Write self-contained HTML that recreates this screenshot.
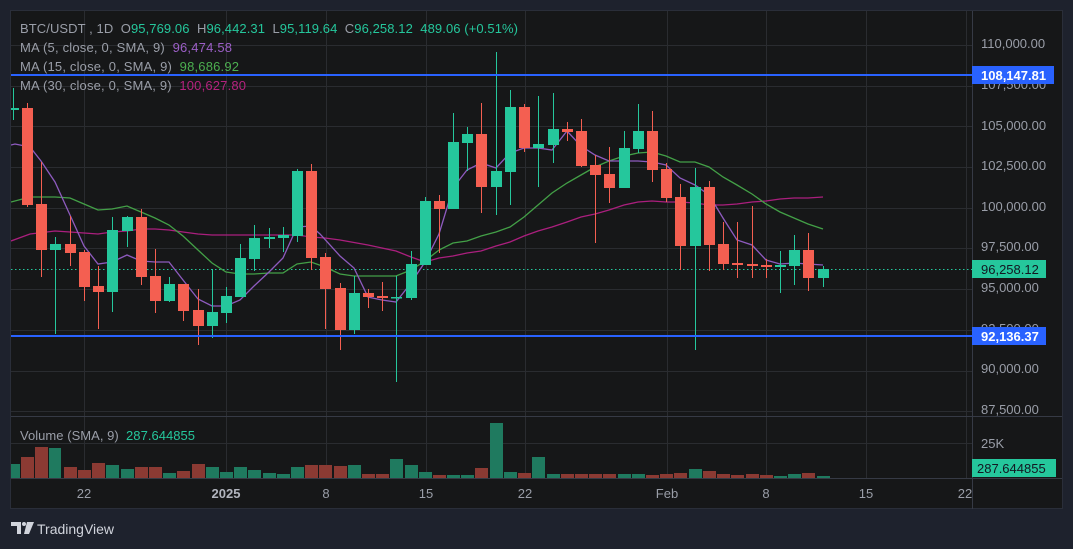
<!DOCTYPE html>
<html><head><meta charset="utf-8"><style>
html,body{margin:0;padding:0;background:#1e222d;width:1073px;height:549px;overflow:hidden}
svg{display:block}
text{font-family:"Liberation Sans",sans-serif;white-space:pre}
</style></head><body>
<svg width="1073" height="549" viewBox="0 0 1073 549" xmlns="http://www.w3.org/2000/svg">
<defs><clipPath id="pc"><rect x="11" y="11" width="961" height="405"/></clipPath>
<clipPath id="vc"><rect x="11" y="416" width="961" height="62"/></clipPath></defs>
<rect x="0" y="0" width="1073" height="549" fill="#1e222d"/>
<rect x="10.5" y="10.5" width="1052" height="498" fill="#161718" stroke="#2a2e39"/>
<g stroke="#2a2c30" stroke-width="1">
<line x1="11" x2="972" y1="45.5" y2="45.5"/><line x1="11" x2="972" y1="86.5" y2="86.5"/>
<line x1="11" x2="972" y1="126.5" y2="126.5"/><line x1="11" x2="972" y1="167.5" y2="167.5"/>
<line x1="11" x2="972" y1="208.5" y2="208.5"/><line x1="11" x2="972" y1="248.5" y2="248.5"/>
<line x1="11" x2="972" y1="289.5" y2="289.5"/><line x1="11" x2="972" y1="330.5" y2="330.5"/>
<line x1="11" x2="972" y1="371.5" y2="371.5"/><line x1="11" x2="972" y1="411.5" y2="411.5"/>
<line x1="11" x2="972" y1="443.5" y2="443.5"/>
<line x1="84.5" x2="84.5" y1="11" y2="478"/><line x1="226.5" x2="226.5" y1="11" y2="478"/>
<line x1="326.5" x2="326.5" y1="11" y2="478"/><line x1="426.5" x2="426.5" y1="11" y2="478"/>
<line x1="525.5" x2="525.5" y1="11" y2="478"/><line x1="667.5" x2="667.5" y1="11" y2="478"/>
<line x1="766.5" x2="766.5" y1="11" y2="478"/><line x1="866.5" x2="866.5" y1="11" y2="478"/>
<line x1="966.5" x2="966.5" y1="11" y2="478"/>
</g>
<g stroke="#363a45"><line x1="11" x2="1062" y1="416.5" y2="416.5"/><line x1="11" x2="1062" y1="478.5" y2="478.5"/><line x1="972.5" x2="972.5" y1="11" y2="509"/></g>

<g clip-path="url(#pc)">
<line x1="11" x2="972" y1="269.5" y2="269.5" stroke="#25c79c" stroke-width="1" stroke-dasharray="1.5 2.5"/>
<polyline fill="none" stroke="#ab1f7e" stroke-width="1.3" points="11,241 30,234 55,231 70,232 84,233 98,234 112,232 127,231 141,229 155,229 169,230 183,232 198,234 212,235 226,235 240,235 254,235 269,235 283,235 297,235 311,237 325,238 340,240 368,245 396,251 411,257 425,262 439,258 453,256 467,253 481,251 496,246 510,242 524,236 538,231 552,227 567,222 581,217 595,214 609,210 624,205 638,202 652,201 666,202 680,202 695,203 709,205 723,205 737,204 752,202 766,201 780,199 794,198 808,198 823,197"/>
<polyline fill="none" stroke="#43a047" stroke-width="1.3" points="11,202 30,197 55,197 70,198 84,204 98,210 112,209 127,206 141,212 155,218 169,225 183,236 198,250 212,263 226,272 240,274 254,274 269,273 283,273 297,264 311,262 325,267 340,274 354,276 368,276 382,276 396,276 411,270 425,261 439,250 453,243 467,241 481,236 496,232 510,227 524,217 538,205 552,193 567,183 581,175 595,167 609,161 624,156 638,153 652,152 666,156 680,162 695,162 709,167 723,177 737,185 752,194 766,204 780,212 794,218 808,224 823,229"/>
<polyline fill="none" stroke="#8e5bbf" stroke-width="1.3" points="11,145 15,144 30,147 41,161 55,182 70,215 84,246 98,264 112,262 127,255 141,261 155,262 169,262 183,280 198,299 212,306 226,306 240,300 254,286 269,272 283,258 297,227 311,226 320,234 340,256 354,268 368,297 382,300 396,302 411,283 425,262 439,234 453,188 467,170 481,163 496,168 510,153 524,148 538,148 552,150 567,131 581,146 595,155 609,161 624,161 638,161 652,162 666,165 680,178 695,185 709,195 723,218 737,240 752,245 766,260 780,264 794,263 808,264 823,265"/>
<g fill="#25c79c" stroke="#25c79c" stroke-width="1">
<line x1="13.5" x2="13.5" y1="88" y2="120"/><rect x="8" y="108" width="11" height="2" stroke="none"/>
<line x1="55.5" x2="55.5" y1="237" y2="334"/><rect x="50" y="244" width="11" height="6" stroke="none"/>
<line x1="112.5" x2="112.5" y1="217" y2="312"/><rect x="107" y="230" width="11" height="62" stroke="none"/>
<line x1="127.5" x2="127.5" y1="216" y2="247"/><rect x="122" y="217" width="11" height="14" stroke="none"/>
<line x1="169.5" x2="169.5" y1="277" y2="302"/><rect x="164" y="284" width="11" height="17" stroke="none"/>
<line x1="212.5" x2="212.5" y1="269" y2="338"/><rect x="207" y="312" width="11" height="14" stroke="none"/>
<line x1="226.5" x2="226.5" y1="287" y2="323"/><rect x="221" y="296" width="11" height="17" stroke="none"/>
<line x1="240.5" x2="240.5" y1="244" y2="297"/><rect x="235" y="258" width="11" height="39" stroke="none"/>
<line x1="254.5" x2="254.5" y1="225" y2="271"/><rect x="249" y="238" width="11" height="21" stroke="none"/>
<line x1="269.5" x2="269.5" y1="228" y2="248"/><rect x="264" y="237" width="11" height="2" stroke="none"/>
<line x1="283.5" x2="283.5" y1="227" y2="252"/><rect x="278" y="235" width="11" height="3" stroke="none"/>
<line x1="297.5" x2="297.5" y1="169" y2="242"/><rect x="292" y="171" width="11" height="65" stroke="none"/>
<line x1="354.5" x2="354.5" y1="276" y2="334"/><rect x="349" y="293" width="11" height="37" stroke="none"/>
<line x1="396.5" x2="396.5" y1="276" y2="382"/><rect x="391" y="297" width="11" height="1.5" stroke="none"/>
<line x1="411.5" x2="411.5" y1="251" y2="300"/><rect x="406" y="264" width="11" height="34" stroke="none"/>
<line x1="425.5" x2="425.5" y1="197" y2="265"/><rect x="420" y="201" width="11" height="64" stroke="none"/>
<line x1="453.5" x2="453.5" y1="113" y2="209"/><rect x="448" y="142" width="11" height="67" stroke="none"/>
<line x1="467.5" x2="467.5" y1="127" y2="171"/><rect x="462" y="134" width="11" height="9" stroke="none"/>
<line x1="496.5" x2="496.5" y1="52" y2="215"/><rect x="491" y="171" width="11" height="16" stroke="none"/>
<line x1="510.5" x2="510.5" y1="90" y2="205"/><rect x="505" y="107" width="11" height="65" stroke="none"/>
<line x1="538.5" x2="538.5" y1="96" y2="187"/><rect x="533" y="144" width="11" height="4" stroke="none"/>
<line x1="553.5" x2="553.5" y1="93" y2="163"/><rect x="548" y="129" width="11" height="16" stroke="none"/>
<line x1="624.5" x2="624.5" y1="131" y2="188"/><rect x="619" y="148" width="11" height="40" stroke="none"/>
<line x1="638.5" x2="638.5" y1="104" y2="153"/><rect x="633" y="131" width="11" height="18" stroke="none"/>
<line x1="695.5" x2="695.5" y1="168" y2="350"/><rect x="690" y="187" width="11" height="59" stroke="none"/>
<line x1="780.5" x2="780.5" y1="251" y2="293"/><rect x="775" y="265" width="11" height="2" stroke="none"/>
<line x1="794.5" x2="794.5" y1="235" y2="285"/><rect x="789" y="250" width="11" height="16" stroke="none"/>
<line x1="823.5" x2="823.5" y1="266" y2="287"/><rect x="818" y="269" width="11" height="9" stroke="none"/>
</g>
<g fill="#f45f51" stroke="#f45f51" stroke-width="1">
<line x1="27.5" x2="27.5" y1="103" y2="207"/><rect x="22" y="108" width="11" height="97" stroke="none"/>
<line x1="41.5" x2="41.5" y1="162" y2="277"/><rect x="36" y="204" width="11" height="46" stroke="none"/>
<line x1="70.5" x2="70.5" y1="216" y2="266"/><rect x="65" y="244" width="11" height="9" stroke="none"/>
<line x1="84.5" x2="84.5" y1="250" y2="301"/><rect x="79" y="252" width="11" height="35" stroke="none"/>
<line x1="98.5" x2="98.5" y1="266" y2="329"/><rect x="93" y="286" width="11" height="6" stroke="none"/>
<line x1="141.5" x2="141.5" y1="209" y2="285"/><rect x="136" y="217" width="11" height="60" stroke="none"/>
<line x1="155.5" x2="155.5" y1="249" y2="313"/><rect x="150" y="276" width="11" height="25" stroke="none"/>
<line x1="183.5" x2="183.5" y1="284" y2="321"/><rect x="178" y="284" width="11" height="27" stroke="none"/>
<line x1="198.5" x2="198.5" y1="289" y2="345"/><rect x="193" y="310" width="11" height="16" stroke="none"/>
<line x1="311.5" x2="311.5" y1="164" y2="270"/><rect x="306" y="171" width="11" height="87" stroke="none"/>
<line x1="325.5" x2="325.5" y1="253" y2="329"/><rect x="320" y="257" width="11" height="32" stroke="none"/>
<line x1="340.5" x2="340.5" y1="283" y2="350"/><rect x="335" y="288" width="11" height="42" stroke="none"/>
<line x1="368.5" x2="368.5" y1="289" y2="308"/><rect x="363" y="293" width="11" height="4" stroke="none"/>
<line x1="382.5" x2="382.5" y1="282" y2="311"/><rect x="377" y="296" width="11" height="2" stroke="none"/>
<line x1="439.5" x2="439.5" y1="195" y2="253"/><rect x="434" y="201" width="11" height="8" stroke="none"/>
<line x1="481.5" x2="481.5" y1="103" y2="213"/><rect x="476" y="134" width="11" height="53" stroke="none"/>
<line x1="524.5" x2="524.5" y1="104" y2="152"/><rect x="519" y="107" width="11" height="41" stroke="none"/>
<line x1="567.5" x2="567.5" y1="122" y2="141"/><rect x="562" y="129" width="11" height="3" stroke="none"/>
<line x1="581.5" x2="581.5" y1="119" y2="167"/><rect x="576" y="131" width="11" height="35" stroke="none"/>
<line x1="595.5" x2="595.5" y1="155" y2="243"/><rect x="590" y="165" width="11" height="10" stroke="none"/>
<line x1="609.5" x2="609.5" y1="147" y2="203"/><rect x="604" y="174" width="11" height="14" stroke="none"/>
<line x1="652.5" x2="652.5" y1="111" y2="182"/><rect x="647" y="131" width="11" height="39" stroke="none"/>
<line x1="666.5" x2="666.5" y1="163" y2="202"/><rect x="661" y="169" width="11" height="29" stroke="none"/>
<line x1="680.5" x2="680.5" y1="184" y2="270"/><rect x="675" y="197" width="11" height="49" stroke="none"/>
<line x1="709.5" x2="709.5" y1="181" y2="271"/><rect x="704" y="187" width="11" height="58" stroke="none"/>
<line x1="723.5" x2="723.5" y1="222" y2="270"/><rect x="718" y="244" width="11" height="20" stroke="none"/>
<line x1="737.5" x2="737.5" y1="222" y2="278"/><rect x="732" y="263" width="11" height="2" stroke="none"/>
<line x1="752.5" x2="752.5" y1="206" y2="278"/><rect x="747" y="264" width="11" height="2" stroke="none"/>
<line x1="766.5" x2="766.5" y1="259" y2="278"/><rect x="761" y="265" width="11" height="2" stroke="none"/>
<line x1="808.5" x2="808.5" y1="233" y2="291"/><rect x="803" y="250" width="11" height="28" stroke="none"/>
</g>
</g>
<line x1="11" x2="972" y1="75" y2="75" stroke="#2962ff" stroke-width="2"/>
<line x1="11" x2="972" y1="336" y2="336" stroke="#2962ff" stroke-width="2"/>

<g clip-path="url(#vc)">
<g fill="#1f7a5f">
<rect x="8" y="464" width="12" height="14"/><rect x="49" y="448" width="12" height="30"/>
<rect x="106" y="465" width="13" height="13"/><rect x="121" y="469" width="13" height="9"/>
<rect x="163" y="473" width="13" height="5"/><rect x="206" y="467" width="13" height="11"/>
<rect x="220" y="472" width="13" height="6"/><rect x="234" y="467" width="13" height="11"/>
<rect x="248" y="470" width="13" height="8"/><rect x="263" y="473" width="13" height="5"/>
<rect x="277" y="474" width="13" height="4"/><rect x="291" y="467" width="13" height="11"/>
<rect x="348" y="465" width="13" height="13"/><rect x="390" y="459" width="13" height="19"/>
<rect x="405" y="465" width="13" height="13"/><rect x="419" y="472" width="13" height="6"/>
<rect x="447" y="475" width="13" height="3"/><rect x="461" y="475" width="13" height="3"/>
<rect x="490" y="423" width="13" height="55"/><rect x="504" y="472" width="13" height="6"/>
<rect x="532" y="457" width="13" height="21"/><rect x="547" y="474" width="13" height="4"/>
<rect x="618" y="474" width="13" height="4"/><rect x="632" y="474" width="13" height="4"/>
<rect x="689" y="469" width="13" height="9"/><rect x="774" y="476" width="13" height="2"/>
<rect x="788" y="474" width="13" height="4"/><rect x="817" y="476" width="13" height="2"/>
</g>
<g fill="#8b3a33">
<rect x="21" y="457" width="13" height="21"/><rect x="35" y="447" width="13" height="31"/>
<rect x="64" y="467" width="13" height="11"/><rect x="78" y="470" width="13" height="8"/>
<rect x="92" y="463" width="13" height="15"/><rect x="135" y="467" width="13" height="11"/>
<rect x="149" y="467" width="13" height="11"/><rect x="177" y="471" width="13" height="7"/>
<rect x="192" y="464" width="13" height="14"/><rect x="305" y="465" width="13" height="13"/>
<rect x="319" y="465" width="13" height="13"/><rect x="334" y="466" width="13" height="12"/>
<rect x="362" y="474" width="13" height="4"/><rect x="376" y="474" width="13" height="4"/>
<rect x="433" y="475" width="13" height="3"/><rect x="475" y="468" width="13" height="10"/>
<rect x="518" y="473" width="13" height="5"/><rect x="561" y="474" width="13" height="4"/>
<rect x="575" y="474" width="13" height="4"/><rect x="589" y="474" width="13" height="4"/>
<rect x="603" y="474" width="13" height="4"/><rect x="646" y="475" width="13" height="3"/>
<rect x="660" y="474" width="13" height="4"/><rect x="674" y="473" width="13" height="5"/>
<rect x="703" y="471" width="13" height="7"/><rect x="717" y="474" width="13" height="4"/>
<rect x="731" y="475" width="13" height="3"/><rect x="746" y="474" width="13" height="4"/>
<rect x="760" y="475" width="13" height="3"/><rect x="802" y="473" width="13" height="5"/>
</g>
</g>

<g font-size="13" fill="#9a9ea8">
<text x="20" y="33" textLength="498" lengthAdjust="spacing">BTC/USDT , 1D  O<tspan fill="#25c79c">95,769.06</tspan>  H<tspan fill="#25c79c">96,442.31</tspan>  L<tspan fill="#25c79c">95,119.64</tspan>  C<tspan fill="#25c79c">96,258.12</tspan>  <tspan fill="#25c79c">489.06 (+0.51%)</tspan></text>
<text x="20" y="52" textLength="212" lengthAdjust="spacing">MA (5, close, 0, SMA, 9)  <tspan fill="#9c5fc7">96,474.58</tspan></text>
<text x="20" y="71" textLength="219" lengthAdjust="spacing">MA (15, close, 0, SMA, 9)  <tspan fill="#4caf50">98,686.92</tspan></text>
<text x="20" y="90" textLength="226" lengthAdjust="spacing">MA (30, close, 0, SMA, 9)  <tspan fill="#b5227e">100,627.80</tspan></text>
<text x="20" y="440" textLength="175" lengthAdjust="spacing">Volume (SMA, 9)  <tspan fill="#25c79c">287.644855</tspan></text>
</g>

<g font-size="13" fill="#9a9ea8">
<text x="981" y="48">110,000.00</text><text x="981" y="89">107,500.00</text>
<text x="981" y="130">105,000.00</text><text x="981" y="170">102,500.00</text>
<text x="981" y="211">100,000.00</text><text x="981" y="251">97,500.00</text>
<text x="981" y="292">95,000.00</text><text x="981" y="333">92,500.00</text>
<text x="981" y="373">90,000.00</text><text x="981" y="414">87,500.00</text>
<text x="981" y="448">25K</text>
</g>
<rect x="972" y="66" width="82" height="18" fill="#2962ff"/>
<text x="981" y="80" font-size="13" font-weight="bold" fill="#fff">108,147.81</text>
<rect x="972" y="327" width="74" height="18" fill="#2962ff"/>
<text x="981" y="341" font-size="13" font-weight="bold" fill="#fff">92,136.37</text>
<rect x="972" y="260" width="74" height="18" fill="#25c79c"/>
<text x="981" y="274" font-size="13" fill="#131722">96,258.12</text>
<rect x="972" y="459" width="84" height="18" fill="#25c79c"/>
<text x="977" y="473" font-size="13" fill="#131722">287.644855</text>

<g font-size="13" fill="#9a9ea8" text-anchor="middle">
<text x="84" y="498">22</text><text x="226" y="498" font-weight="bold" fill="#b2b5be">2025</text>
<text x="326" y="498">8</text><text x="426" y="498">15</text><text x="525" y="498">22</text>
<text x="667" y="498">Feb</text><text x="766" y="498">8</text><text x="866" y="498">15</text><text x="965" y="498">22</text>
</g>

<g fill="#d1d4dc">
<path d="M11 522h10v12h-4v-8h-6z"/>
<circle cx="24" cy="524" r="2"/>
<path d="M27 522h7l-5 12h-5z"/>
</g>
<text x="37" y="534" font-size="14" fill="#d1d4dc">TradingView</text>
</svg>
</body></html>
